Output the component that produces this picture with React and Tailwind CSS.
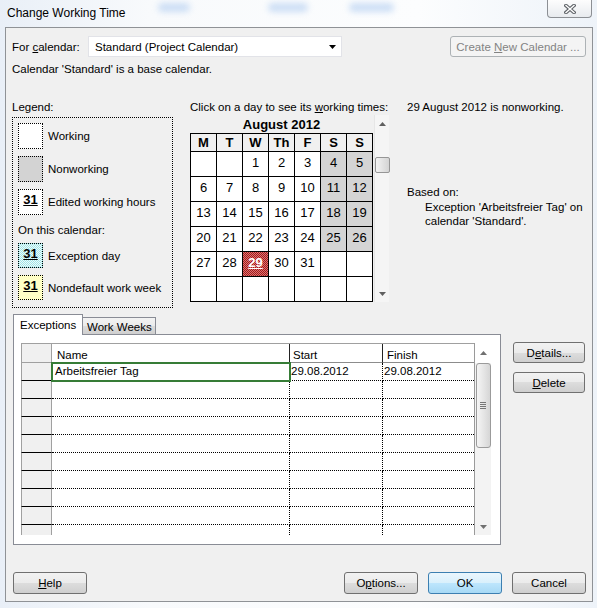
import React from 'react';

// underlined access key letter
const Key = ({ children }) => <span className="underline">{children}</span>;

const btnNormal =
  'border-[#707070] bg-[linear-gradient(#f2f2f2,#ebebeb_50%,#dddddd_50%,#cfcfcf)] text-black';
const btnDefault =
  'border-[#3c7fb1] bg-[linear-gradient(#eaf6fd,#d9f0fc_50%,#bee6fd_50%,#a7d9f5)] text-black';
const btnDisabled = 'border-[#adb2b5] bg-[#f4f4f4] text-[#838383]';

const Button = ({ children, className = '', kind = 'normal' }) => {
  const look = kind === 'default' ? btnDefault : kind === 'disabled' ? btnDisabled : btnNormal;
  return (
    <div
      className={`flex items-center justify-center rounded-[3px] border text-[11.5px] leading-[14px] ${look} ${className}`}
    >
      <span className="whitespace-pre">{children}</span>
    </div>
  );
};

const Swatch = ({ className = 'bg-white', show31 = false }) => (
  <div
    className={`w-[25px] h-full border border-dotted border-black flex justify-center pt-[2px] ${className}`}
  >
    {show31 && <span className="text-[13px] font-bold underline leading-[15px]">31</span>}
  </div>
);

const LegendItem = ({ label, className, show31, extra = '' }) => (
  <div className={`flex items-start ${extra}`}>
    <Swatch className={className} show31={show31} />
    <span className="ml-[5px] text-[11.5px] leading-[14px] self-center">{label}</span>
  </div>
);

const ArrowUp = ({ color = '#606060' }) => (
  <svg width="7" height="4" viewBox="0 0 7 4">
    <path d="M0 4 L3.5 0 L7 4 Z" fill={color} />
  </svg>
);
const ArrowDown = ({ color = '#606060' }) => (
  <svg width="7" height="4" viewBox="0 0 7 4">
    <path d="M0 0 L7 0 L3.5 4 Z" fill={color} />
  </svg>
);

const weeks = [
  [null, null, 1, 2, 3, 4, 5],
  [6, 7, 8, 9, 10, 11, 12],
  [13, 14, 15, 16, 17, 18, 19],
  [20, 21, 22, 23, 24, 25, 26],
  [27, 28, 29, 30, 31, null, null],
  [null, null, null, null, null, null, null],
];
const dayNames = ['M', 'T', 'W', 'Th', 'F', 'S', 'S'];

const Calendar = () => (
  <div className="flex items-start">
    <div className="w-[183px]">
      <div className="h-[18px] flex items-center justify-center text-[13px] font-bold leading-[15px]">
        August 2012
      </div>
      <div className="grid grid-cols-[repeat(7,26px)] border-l border-t border-black">
        {dayNames.map((d, i) => (
          <div
            key={'h' + i}
            className="h-[18px] border-r border-b border-black bg-[#f0f0f0] flex items-center justify-center text-[13px] font-bold leading-[15px]"
          >
            {d}
          </div>
        ))}
        {weeks.flatMap((w, wi) =>
          w.map((d, di) => {
            const weekend = di >= 5 && d !== null;
            const exception = d === 29;
            let bg = 'bg-white';
            if (weekend) bg = 'bg-[#d4d4d4]';
            if (exception)
              bg =
                'bg-[repeating-conic-gradient(#9e1f1d_0_25%,#e07070_0_50%)] bg-[length:2px_2px] text-white font-bold underline';
            return (
              <div
                key={wi + '-' + di}
                className={`h-[25px] border-r border-b border-black flex justify-center pt-[3px] text-[13px] leading-[15px] ${bg}`}
              >
                {d}
              </div>
            );
          })
        )}
      </div>
    </div>
    {/* month scroller */}
    <div className="ml-[1px] w-[15px] h-[187px] bg-[#f5f5f5] border-l border-[#e6e6e6] flex flex-col items-center">
      <div className="h-[18px] w-full flex items-center justify-center">
        <ArrowUp />
      </div>
      <div className="mt-[24px] w-[15px] h-[16px] rounded-[2px] border border-[#969696] bg-[linear-gradient(90deg,#f4f4f4,#e3e3e3_50%,#d4d4d4)]" />
      <div className="mt-auto h-[17px] w-full flex items-center justify-center">
        <ArrowDown />
      </div>
    </div>
  </div>
);

const tableRows = Array.from({ length: 10 });

const ExceptionsTable = () => (
  <div className="flex h-[192px]">
    <div className="w-[453px] overflow-hidden">
      {/* header */}
      <div className="flex h-[20px] border-t border-[#a0a0a0]">
        <div className="w-[31px] bg-[#f0f0f0] border-l border-r border-b border-[#a0a0a0]" />
        <div className="w-[238px] border-r border-b border-[#222] border-b-[#8c8c8c] pl-[5px] pt-[4px] text-[11.5px] leading-[14px]">
          Name
        </div>
        <div className="w-[93px] border-r border-b border-[#222] border-b-[#8c8c8c] pl-[3px] pt-[4px] text-[11.5px] leading-[14px]">
          Start
        </div>
        <div className="w-[91px] border-b border-[#8c8c8c] pl-[4px] pt-[4px] text-[11.5px] leading-[14px]">
          Finish
        </div>
      </div>
      {tableRows.map((_, i) => (
        <div key={i} className="flex h-[18px]">
          <div className="w-[31px] bg-[#f0f0f0] border-l border-r border-[#a0a0a0] border-b border-b-black" />
          <div
            className={`w-[238px] border-r border-b border-dotted border-black pl-[3px] text-[11.5px] leading-[17px] ${
              i === 0 ? 'relative z-10 outline-2 outline-[#367c36] -outline-offset-1' : ''
            }`}
          >
            {i === 0 ? 'Arbeitsfreier Tag' : ''}
          </div>
          <div className="w-[93px] border-r border-b border-dotted border-black pl-[1px] text-[11.5px] leading-[17px]">
            {i === 0 ? '29.08.2012' : ''}
          </div>
          <div className="w-[91px] border-b border-dotted border-black pl-[1px] text-[11.5px] leading-[17px]">
            {i === 0 ? '29.08.2012' : ''}
          </div>
        </div>
      ))}
    </div>
    {/* vertical scrollbar */}
    <div className="w-[17px] h-full border-l border-[#9a9a9a] bg-[#f3f3f3] flex flex-col items-center">
      <div className="h-[20px] w-full bg-white flex items-center justify-center">
        <ArrowUp color="#707070" />
      </div>
      <div className="w-[15px] h-[85px] rounded-[3px] border border-[#9b9b9b] bg-[linear-gradient(90deg,#f5f5f5,#e6e6e6_50%,#d6d6d6)] flex flex-col items-center justify-center gap-[1px]">
        <div className="w-[6px] h-px bg-[#777]" />
        <div className="w-[6px] h-px bg-[#777]" />
        <div className="w-[6px] h-px bg-[#777]" />
        <div className="w-[6px] h-px bg-[#777]" />
      </div>
      <div className="mt-auto h-[17px] w-full flex items-center justify-center">
        <ArrowDown color="#707070" />
      </div>
    </div>
  </div>
);

export default function App() {
  return (
    <div className="relative w-[597px] h-[608px] overflow-hidden bg-[linear-gradient(90deg,#e9eff7,#f8fafc_25%,#fcfdfe_70%,#eef3f9)] font-['Liberation_Sans',Arial,sans-serif] text-black">
      {/* title bar */}
      <div className="relative h-[27px] flex items-start justify-between">
        <span className="absolute left-[158px] top-[3px] w-[32px] h-[9px] rounded-full bg-[#b9d2f2] blur-[3px] opacity-70" />
        <span className="absolute left-[268px] top-[3px] w-[40px] h-[9px] rounded-full bg-[#b9d2f2] blur-[3px] opacity-70" />
        <span className="absolute left-[349px] top-[3px] w-[45px] h-[9px] rounded-full bg-[#b9d2f2] blur-[3px] opacity-70" />
        <span className="relative pl-[7px] pt-[5px] text-[12px] leading-[16px]">Change Working Time</span>
        <div className="relative mr-[5px] w-[45px] h-[18px] rounded-b-[4px] border border-t-0 border-[#8c8f94] bg-[linear-gradient(#fdfdfd,#e8ebef)] flex items-center justify-center">
          <svg width="12" height="10" viewBox="0 0 12 10">
            <path d="M2 1.5 L10 8.5 M10 1.5 L2 8.5" stroke="#5f6368" strokeWidth="3.6" strokeLinecap="square" />
            <path d="M2 1.5 L10 8.5 M10 1.5 L2 8.5" stroke="#ffffff" strokeWidth="1.4" strokeLinecap="square" />
          </svg>
        </div>
      </div>

      {/* client area */}
      <div className="ml-[5px] mr-[4px] h-[575px] border border-[#8f9296] bg-[#f0f0f0] pl-[6px] pr-[6px]">
        {/* calendar selector */}
        <div className="mt-[8px] flex items-center h-[21px] text-[11.5px] leading-[14px]">
          <span className="w-[76px]">
            For <Key>c</Key>alendar:
          </span>
          <div className="w-[254px] h-[21px] bg-white border border-[#e2e3e8] flex items-center justify-between pl-[6px] pr-[5px]">
            <span>Standard (Project Calendar)</span>
            <ArrowDown color="#000" />
          </div>
          <Button kind="disabled" className="ml-auto w-[136px] h-[21px]">
            Create <Key>N</Key>ew Calendar ...
          </Button>
        </div>
        <div className="mt-[5px] text-[11.5px] leading-[14px]">Calendar 'Standard' is a base calendar.</div>

        {/* legend / calendar / info */}
        <div className="mt-[24px] flex items-start">
          <div className="w-[161px]">
            <div className="text-[11.5px] leading-[14px]">Legend:</div>
            <div className="mt-[3px] h-[191px] border border-dotted border-black pt-[5px] pl-[5px] flex flex-col">
              <LegendItem label="Working" className="bg-white" extra="h-[26px]" />
              <LegendItem label="Nonworking" className="bg-[#d3d3d3]" extra="h-[26px] mt-[7px]" />
              <LegendItem label="Edited working hours" className="bg-white" show31 extra="h-[26px] mt-[7px]" />
              <div className="mt-[8px] text-[11.5px] leading-[14px]">On this calendar:</div>
              <LegendItem
                label="Exception day"
                className="bg-[repeating-conic-gradient(#a3e4e7_0_25%,#ebfbfb_0_50%)] bg-[length:2px_2px]"
                show31
                extra="h-[25px] mt-[6px]"
              />
              <LegendItem label="Nondefault work week" className="bg-[#ffffc6]" show31 extra="h-[25px] mt-[7px]" />
            </div>
          </div>

          <div className="ml-[17px] w-[199px]">
            <div className="text-[11.5px] leading-[14px] whitespace-nowrap">
              Click on a day to see its <Key>w</Key>orking times:
            </div>
            <div className="mt-[1px]">
              <Calendar />
            </div>
          </div>

          <div className="ml-[18px] text-[11.5px] leading-[14px] whitespace-nowrap">
            <div>29 August 2012 is nonworking.</div>
            <div className="mt-[71px]">Based on:</div>
            <div className="mt-[1px] ml-[18px]">
              Exception 'Arbeitsfreier Tag' on
              <br />
              calendar 'Standard'.
            </div>
          </div>
        </div>

        {/* tabs + exceptions grid */}
        <div className="mt-[6px] flex items-start">
          <div className="ml-[1px] w-[488px]">
            <div className="h-[20px] flex items-end text-[11.5px] leading-[14px]">
              <div className="relative z-10 h-[21px] -mb-px w-[70px] bg-white border border-b-0 border-[#898c95] pl-[6px] pt-[3px]">
                Exceptions
              </div>
              <div className="h-[17px] w-[73px] bg-[linear-gradient(#f3f3f3,#ebebeb_50%,#dddddd_50%,#cfcfcf)] border border-l-0 border-b-0 border-[#898c95] pl-[4px] pt-[2px]">
                Work Weeks
              </div>
            </div>
            <div className="h-[211px] bg-white border border-[#898c95] pt-[8px] pl-[7px]">
              <ExceptionsTable />
            </div>
          </div>
          <div className="ml-[12px] mt-[28px] flex flex-col gap-[9px]">
            <Button className="w-[72px] h-[21px]">
              D<Key>e</Key>tails...
            </Button>
            <Button className="w-[72px] h-[21px]">
              <Key>D</Key>elete
            </Button>
          </div>
        </div>

        {/* dialog buttons */}
        <div className="mt-[27px] flex items-center ml-[1px]">
          <Button className="w-[74px] h-[22px]">
            <Key>H</Key>elp
          </Button>
          <div className="ml-auto flex gap-[10px]">
            <Button className="w-[74px] h-[22px]">
              O<Key>p</Key>tions...
            </Button>
            <Button kind="default" className="w-[74px] h-[22px]">
              OK
            </Button>
            <Button className="w-[74px] h-[22px]">Cancel</Button>
          </div>
        </div>
      </div>
    </div>
  );
}
